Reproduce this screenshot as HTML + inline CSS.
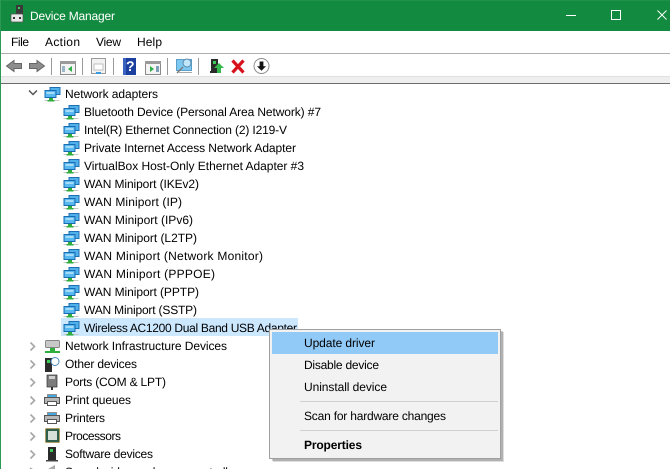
<!DOCTYPE html>
<html><head><meta charset="utf-8"><title>Device Manager</title>
<style>
html,body{margin:0;padding:0;background:#fff;overflow:hidden}
svg{display:block}
text{font-family:"Liberation Sans",sans-serif;font-size:12px;fill:#000;text-rendering:geometricPrecision}
</style></head><body>
<svg xmlns="http://www.w3.org/2000/svg" width="670" height="469" viewBox="0 0 670 469">
<defs>
<g id="net">
<rect x="5" y="1.500" width="10" height="7" fill="#4fb0ea" stroke="#1f6fb5"/>
<rect x="0" y="4.500" width="11" height="7" fill="#58b9f0" stroke="#1a6cb2"/>
<rect x="1.500" y="6" width="8" height="2" fill="#a6dcf8"/>
<rect x="4" y="12" width="4" height="2" fill="#2fae3c"/>
<rect x="-0.500" y="14" width="15" height="1" fill="#c8c8c8"/>
<rect x="2.500" y="14" width="7" height="1.500" fill="#2fae3c"/>
</g>
<path id="cr" d="M0.5 0.5 L4.5 4.5 L0.5 8.5" fill="none" stroke="#a6a6a6" stroke-width="1.6"/>
<g id="printer">
<rect x="3.500" y="0.500" width="9" height="3.500" fill="#f4f4f4" stroke="#777" stroke-width=".8"/>
<rect x="4" y="1" width="8" height="3" fill="#46a8e0"/>
<rect x="0.5" y="3.500" width="15" height="6" fill="#b8b8b8" stroke="#555"/>
<rect x="3.5" y="7.500" width="9" height="4" fill="#fff" stroke="#555"/>
</g>
</defs>

<!-- title bar -->
<rect width="670" height="31" fill="#128a3f"/>
<rect width="670" height="1" fill="#1f9148"/>
<rect x="0" y="0" width="1" height="469" fill="#2c9a55"/>
<g>
<rect x="16" y="5" width="7" height="9" fill="#3a3a3a"/>
<rect x="18" y="7" width="2" height="2" fill="#3ccb55"/>
<rect x="11" y="14" width="12" height="8" rx="1" fill="#e8e8e8" stroke="#555" stroke-width=".7"/>
<rect x="13" y="17" width="2" height="2" fill="#333"/><rect x="19" y="17" width="2" height="2" fill="#333"/>
</g>
<text x="30" y="20" textLength="85" fill="#fff" style="fill:#fff">Device Manager</text>
<rect x="566" y="15" width="10" height="1" fill="#fff"/>
<rect x="611.5" y="10.5" width="9" height="9" fill="none" stroke="#fff"/>
<path d="M657.5 10.5 L666.5 19.5 M666.5 10.5 L657.5 19.5" stroke="#fff" stroke-width="1" fill="none"/>

<!-- menu -->
<text x="11" y="46" textLength="18">File</text>
<text x="45" y="46" textLength="35">Action</text>
<text x="96" y="46" textLength="25">View</text>
<text x="137" y="46" textLength="25">Help</text>
<rect x="1" y="53" width="669" height="1" fill="#aeaeae"/>

<!-- toolbar -->
<rect x="1" y="76" width="669" height="7" fill="#eeeeee"/>
<rect x="1" y="76" width="669" height="1" fill="#e0e0e0"/>
<rect x="1" y="83" width="669" height="1" fill="#6e6e6e"/>
<path d="M6.5 66 L14 60.5 V63.5 H21.5 V68.5 H14 V71.5 Z" fill="#8d8d8d" stroke="#666"/>
<path d="M44.5 66 L37 60.5 V63.5 H29.5 V68.5 H37 V71.5 Z" fill="#8d8d8d" stroke="#666"/>
<rect x="51" y="58" width="1" height="17" fill="#9a9a9a"/>
<rect x="60.5" y="61.5" width="15" height="13" fill="#f4f4f4" stroke="#8a8a8a"/>
<rect x="60" y="61" width="16" height="3" fill="#9a9a9a"/>
<path d="M72 66 V72 L68 69 Z" fill="#2fae4a"/>
<rect x="62" y="66" width="3" height="6" fill="#9ab6c8"/>
<rect x="82" y="58" width="1" height="17" fill="#9a9a9a"/>
<rect x="91.5" y="58.5" width="14" height="15" fill="#f2f2f2" stroke="#9a9a9a"/>
<rect x="94" y="64" width="9" height="6" fill="#fff" stroke="#a8a8a8" stroke-width=".7"/>
<rect x="96" y="72" width="5" height="2" fill="#3a9be0"/>
<rect x="113" y="58" width="1" height="17" fill="#9a9a9a"/>
<rect x="123" y="58" width="13" height="17" fill="#1a3f9e"/>
<rect x="123" y="58" width="3" height="17" fill="#3a63c0"/>
<text x="126" y="71" style="font-weight:bold;font-size:14px;fill:#fff">?</text>
<rect x="145.5" y="61.5" width="15" height="13" fill="#f4f4f4" stroke="#8a8a8a"/>
<rect x="145" y="61" width="16" height="3" fill="#9a9a9a"/>
<path d="M150 66 V72 L154 69 Z" fill="#2fae4a"/>
<rect x="156" y="66" width="3" height="6" fill="#7f9fb8"/>
<rect x="167" y="58" width="1" height="17" fill="#9a9a9a"/>
<rect x="176.5" y="59.5" width="15" height="11" fill="#7cc8f2" stroke="#5a9fc8"/>
<circle cx="187" cy="63" r="4" fill="#bfe6fa" stroke="#5a88a8"/>
<path d="M183 67 L177 73" stroke="#777" stroke-width="1.4"/>
<rect x="178" y="72" width="14" height="1" fill="#a8a8a8"/>
<rect x="198" y="58" width="1" height="17" fill="#9a9a9a"/>
<rect x="211" y="59" width="7" height="14" fill="#2b2b2b"/>
<rect x="213" y="61" width="3" height="3" fill="#3ccb55"/>
<rect x="210" y="71" width="9" height="2" fill="#2b2b2b"/>
<path d="M219 63 L224 68 H221 V73 H217 V68 H214 Z" fill="#35b84c"/>
<path d="M232.5 60.5 L243.5 72.5 M243.5 60.5 L232.5 72.5" stroke="#d8121d" stroke-width="3.2"/>
<circle cx="261.5" cy="66" r="7.5" fill="#fff" stroke="#8a8a8a"/>
<path d="M261.5 70.8 L257 66.2 H259.6 V61.5 H263.4 V66.2 H266 Z" fill="#111"/>

<!-- tree -->
<path d="M29 90.5 L33 94.5 L37 90.5" fill="none" stroke="#555" stroke-width="1.5"/>
<use href="#net" x="45" y="86"/>
<text x="65" y="98" textLength="93">Network adapters</text>

<use href="#net" x="64" y="104"/><text x="84" y="116" textLength="237">Bluetooth Device (Personal Area Network) #7</text>
<use href="#net" x="64" y="122"/><text x="84" y="134" textLength="203">Intel(R) Ethernet Connection (2) I219-V</text>
<use href="#net" x="64" y="140"/><text x="84" y="152" textLength="212">Private Internet Access Network Adapter</text>
<use href="#net" x="64" y="158"/><text x="84" y="170" textLength="220">VirtualBox Host-Only Ethernet Adapter #3</text>
<use href="#net" x="64" y="176"/><text x="84" y="188" textLength="115">WAN Miniport (IKEv2)</text>
<use href="#net" x="64" y="194"/><text x="84" y="206" textLength="98">WAN Miniport (IP)</text>
<use href="#net" x="64" y="212"/><text x="84" y="224" textLength="109">WAN Miniport (IPv6)</text>
<use href="#net" x="64" y="230"/><text x="84" y="242" textLength="113">WAN Miniport (L2TP)</text>
<use href="#net" x="64" y="248"/><text x="84" y="260" textLength="179">WAN Miniport (Network Monitor)</text>
<use href="#net" x="64" y="266"/><text x="84" y="278" textLength="131">WAN Miniport (PPPOE)</text>
<use href="#net" x="64" y="284"/><text x="84" y="296" textLength="115">WAN Miniport (PPTP)</text>
<use href="#net" x="64" y="302"/><text x="84" y="314" textLength="113">WAN Miniport (SSTP)</text>
<rect x="61" y="318" width="237" height="18" fill="#cce8ff"/>
<use href="#net" x="64" y="320"/><text x="84" y="332" textLength="213">Wireless AC1200 Dual Band USB Adapter</text>

<use href="#cr" x="30" y="342"/>
<rect x="45.500" y="340.500" width="14" height="7" rx="1" fill="#c8c8c8" stroke="#666" stroke-width=".7"/>
<rect x="50" y="348" width="5" height="3" fill="#2fae3c"/><rect x="45" y="351" width="15" height="2" fill="#2fae3c"/>
<text x="65" y="350" textLength="162">Network Infrastructure Devices</text>

<use href="#cr" x="30" y="360"/>
<rect x="45" y="358" width="7" height="14" fill="#2b2b2b"/><rect x="47" y="360" width="3" height="3" fill="#3ccb55"/>
<circle cx="55" cy="361.500" r="4" fill="#fff" stroke="#4a8ac0"/>
<text x="65" y="368" textLength="72">Other devices</text>

<use href="#cr" x="30" y="378"/>
<rect x="47" y="375" width="10" height="12" fill="#7c7c7c" stroke="#333" stroke-width=".7"/>
<rect x="49" y="376" width="6" height="3" fill="#cfcfcf"/>
<rect x="51" y="387" width="2" height="3" fill="#333"/>
<text x="65" y="386" textLength="101">Ports (COM &amp; LPT)</text>

<use href="#cr" x="30" y="396"/>
<use href="#printer" x="44" y="394"/>
<text x="65" y="404" textLength="66">Print queues</text>

<use href="#cr" x="30" y="414"/>
<use href="#printer" x="44" y="412"/>
<text x="65" y="422" textLength="40">Printers</text>

<use href="#cr" x="30" y="432"/>
<rect x="45.500" y="428.500" width="14" height="14" fill="#2f5f4a" stroke="#c98a2a" stroke-dasharray="1 1"/>
<rect x="48" y="431" width="9" height="9" fill="#d8e0da"/>
<text x="65" y="440" textLength="56">Processors</text>

<use href="#cr" x="30" y="450"/>
<rect x="48" y="447" width="8" height="14" fill="#2b2b2b"/><rect x="50" y="449" width="3" height="3" fill="#3ccb55"/>
<rect x="46" y="460" width="12" height="1.500" fill="#444"/>
<text x="65" y="458" textLength="88">Software devices</text>

<path d="M30 468 L33 470" stroke="#a6a6a6" stroke-width="1.600"/>
<path d="M48 469 L55 465 V469 Z" fill="#aaa"/>
<text x="65" y="476" textLength="179">Sound, video and game controllers</text>

<!-- context menu -->
<rect x="273" y="332" width="231" height="130" fill="#000" opacity=".13"/>
<rect x="272" y="331" width="231" height="130" fill="#000" opacity=".2"/>
<rect x="269.500" y="329.500" width="231" height="129" fill="#f2f2f2" stroke="#a0a0a0"/>
<rect x="272" y="332" width="226" height="22" fill="#91c9f7"/>
<text x="304" y="347" textLength="71">Update driver</text>
<text x="304" y="369" textLength="75">Disable device</text>
<text x="304" y="391" textLength="83">Uninstall device</text>
<rect x="300" y="401" width="198" height="1" fill="#d0d0d0"/>
<text x="304" y="420" textLength="142">Scan for hardware changes</text>
<rect x="300" y="430" width="198" height="1" fill="#d0d0d0"/>
<text x="304" y="449" textLength="58" style="font-weight:bold">Properties</text>
</svg>
</body></html>
